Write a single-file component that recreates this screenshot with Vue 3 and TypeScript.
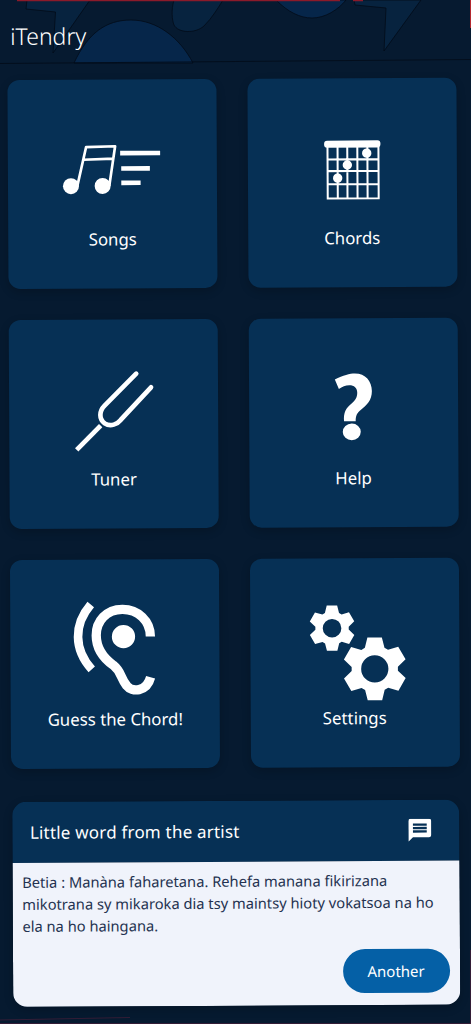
<script setup lang="ts">
const message = 'Betia : Manàna faharetana. Rehefa manana fikirizana mikotrana sy mikaroka dia tsy maintsy hioty vokatsoa na ho ela na ho haingana.'

function gearPath(cx: number, cy: number, R: number, hole: number): string {
  const parts: string[] = []
  const pt = (radius: number, deg: number): string => {
    const a = ((deg - 90) * Math.PI) / 180
    return `${(cx + radius * Math.cos(a)).toFixed(1)} ${(cy + radius * Math.sin(a)).toFixed(1)}`
  }
  for (let k = 0; k < 6; k++) {
    const c = k * 60
    parts.push(`${k === 0 ? 'M' : 'L'}${pt(R * 0.72, c - 25)}`)
    parts.push(`L${pt(R, c - 13)}`)
    parts.push(`L${pt(R, c + 13)}`)
    parts.push(`L${pt(R * 0.72, c + 25)}`)
  }
  parts.push('Z')
  parts.push(`M${cx - hole} ${cy}a${hole} ${hole} 0 1 0 ${hole * 2} 0a${hole} ${hole} 0 1 0 ${-hole * 2} 0Z`)
  return parts.join(' ')
}

const smallGear = gearPath(286, 233, 70, 28)
const bigGear = gearPath(414, 356, 97, 41)
</script>

<template>
  <div class="screen">
    <svg class="deco" width="471" height="1024" viewBox="0 0 471 1024">
      <g fill="#07233f" stroke="#020b18" stroke-width=".8">
        <path d="M27 0 L26 9 L55.500 12 L53 53 L90 0Z" />
        <path d="M174 0 C171 10 172 20 174 25 C178 33 195 34 204 26 C212 18 218 8 223 0Z" />
        <path d="M276 0 C288 12 300 18 312 18 C325 18 338 10 346 0Z" fill="#06264a" />
        <path d="M354 0 L355 5 L386 8 L384 51 L421 0Z" />
        <path d="M74 63 C88 33 106 20 131 20 C157 20 180 38 193 63Z" fill="#06264a" />
      </g>
      <path d="M0 63.500 L471 59.500" stroke="#020b18" stroke-width=".8" fill="none" />
      <path d="M17 .5 H340 M353 .5 H363" stroke="#8b1a2a" stroke-width="1.400" fill="none" />
      <path d="M470.500 0 V28" stroke="#b3282f" stroke-width="1" fill="none" />
      <path d="M0 1020 L130 1017.500 M0 1023.500 H471 M470.500 950 V1024" stroke="#47203a" stroke-width=".7" fill="none" />
    </svg>
    <div class="page">
      <header class="bar">iTendry</header>
      <div class="grid">
        <button class="tile">
          <span class="ico">
            <svg class="i-songs" width="100" height="52" viewBox="185 220 300 155">
              <circle cx="212" cy="347" r="24" fill="#fff" />
              <circle cx="307" cy="347" r="24" fill="#fff" />
              <path d="M231 347 L258 230 L345 228 L327 347 M250 268 L340 265" fill="none" stroke="#fff" stroke-width="8" stroke-linejoin="round" />
              <path d="M360 249 H480 M363 295 H449 M363 338 H421" fill="none" stroke="#fff" stroke-width="14" />
            </svg>
          </span>
          <span class="label">Songs</span>
        </button>
        <button class="tile">
          <span class="ico">
            <svg class="i-chords" width="59" height="61" viewBox="262 208 176 182">
              <path d="M276 225 V385 H428 V225 M306 225 V385 M335 225 V385 M365 225 V385 M395 225 V385 M276 268 H428 M276 303 H428 M276 342 H428" fill="none" stroke="#fff" stroke-width="6" />
              <rect x="266" y="212" width="168" height="21" rx="9" fill="#fff" />
              <circle cx="393" cy="250" r="14" fill="#fff" />
              <circle cx="335" cy="285" r="14" fill="#fff" />
              <circle cx="306" cy="324" r="14" fill="#fff" />
            </svg>
          </span>
          <span class="label">Chords</span>
        </button>
        <button class="tile">
          <span class="ico">
            <svg class="i-tuner" width="82" height="82" viewBox="218 180 245 245">
              <path d="M228 417 L300 345" fill="none" stroke="#fff" stroke-width="14" />
              <path d="M407 190 L312 285 C295 302 295 325 312 338 C330 350 350 340 360 328 L451 231" fill="none" stroke="#fff" stroke-width="14" stroke-linecap="round" />
            </svg>
          </span>
          <span class="label">Tuner</span>
        </button>
        <button class="tile">
          <span class="ico">
            <svg class="i-help" width="41" height="70" viewBox="295 183 122 210">
              <path d="M300 205 C325 192 345 187 360 187 C392 187 411 210 411 240 C411 268 395 283 378 296 C365 306 362 315 362 330 H327 C325 305 333 290 350 277 C362 267 367 258 367 245 C367 230 358 222 343 222 C332 222 322 226 312 233 Z" fill="#fff" />
              <ellipse cx="350" cy="362" rx="27" ry="25" fill="#fff" />
            </svg>
          </span>
          <span class="label">Help</span>
        </button>
        <button class="tile">
          <span class="ico">
            <svg class="i-ear" width="87" height="98" viewBox="215 150 260 295">
              <path d="M273 165 C221 225 221 300 275 360" fill="none" stroke="#fff" stroke-width="26" />
              <path d="M452 262 C452 215 415 180 368 180 C320 180 289 215 289 258 C289 300 315 330 340 348 C365 368 360 385 380 410 C395 430 440 430 452 385" fill="none" stroke="#fff" stroke-width="28" />
              <circle cx="371" cy="262" r="35" fill="#fff" />
            </svg>
          </span>
          <span class="label">Guess the Chord!</span>
        </button>
        <button class="tile">
          <span class="ico">
            <svg class="i-gears" width="99" height="99" viewBox="215 158 297 298">
              <path :d="smallGear" fill="#fff" fill-rule="evenodd" />
              <path :d="bigGear" fill="#fff" fill-rule="evenodd" />
            </svg>
          </span>
          <span class="label">Settings</span>
        </button>
      </div>
      <section class="word">
        <div class="word-head">
          <span>Little word from the artist</span>
          <svg width="23" height="23" viewBox="2 2 20 20"><path fill="#fff" d="M22 4a2 2 0 0 0-2-2H4a2 2 0 0 0-2 2v18l4-4h14a2 2 0 0 0 2-2zM18 14H6v-2h12zm0-3H6V9h12zm0-3H6V6h12z" /></svg>
        </div>
        <div class="word-body">
          <p>{{ message }}</p>
          <button class="another">Another</button>
        </div>
      </section>
    </div>
  </div>
</template>

<style>
html, body { margin: 0; background: #061a30; }
</style>

<style scoped>
.screen {
  position: relative;
  width: 471px;
  height: 1024px;
  overflow: hidden;
  background: #061a30;
  font-family: "Noto Sans", sans-serif;
}
.deco { position: absolute; left: 0; top: 0; }
.page {
  position: relative;
  transform: rotate(-0.3deg);
  transform-origin: 0 0;
  padding-left: 7px;
  width: 464px;
}
.bar {
  height: 80px;
  display: flex;
  align-items: center;
  color: #fff;
  font-size: 23px;
  font-weight: 300;
  padding: 0 0 9px 3px;
  box-sizing: border-box;
}
.grid {
  display: grid;
  grid-template-columns: 209px 209px;
  grid-auto-rows: 209px;
  gap: 31px 30.500px;
}
.tile {
  border: 0;
  padding: 24px 0 0;
  background: #063055;
  border-radius: 12px;
  box-shadow: 0 3px 10px rgba(0, 0, 0, .2);
  color: #fff;
  font: inherit;
  font-size: 16.800px;
  display: flex;
  flex-direction: column;
  align-items: center;
  justify-content: flex-start;
}
.ico {
  height: 124px;
  display: flex;
  align-items: center;
  justify-content: center;
}
.i-songs { margin: 8px 2px 0 0; }
.i-chords { margin-top: 11px; }
.i-tuner { margin-top: 12px; }
.i-help { margin-top: 6px; }
.i-ear { margin-top: 6px; }
.i-gears { margin: 16px 0 0 6px; }
.label { line-height: 24px; }
.word {
  margin: 33px 0 0 .5px;
  width: 447px;
  border-radius: 14px;
  overflow: hidden;
  box-shadow: 0 3px 10px rgba(0, 0, 0, .2);
}
.word-head {
  height: 61px;
  background: #063055;
  color: #fff;
  display: flex;
  align-items: center;
  justify-content: space-between;
  padding: 0 28px 0 18px;
  font-size: 17px;
  letter-spacing: .2px;
}
.word-body {
  background: #f0f3fb;
  height: 144px;
  padding: 8px 10px 12px 10px;
  box-sizing: border-box;
  display: flex;
  flex-direction: column;
  justify-content: space-between;
}
.word-body p {
  margin: 0;
  color: #243250;
  font-size: 14.700px;
  line-height: 22px;
}
.another {
  align-self: flex-end;
  width: 107px;
  height: 44px;
  border: 0;
  border-radius: 22px;
  background: #0560a6;
  color: #fff;
  font: inherit;
  font-size: 15px;
}
</style>
